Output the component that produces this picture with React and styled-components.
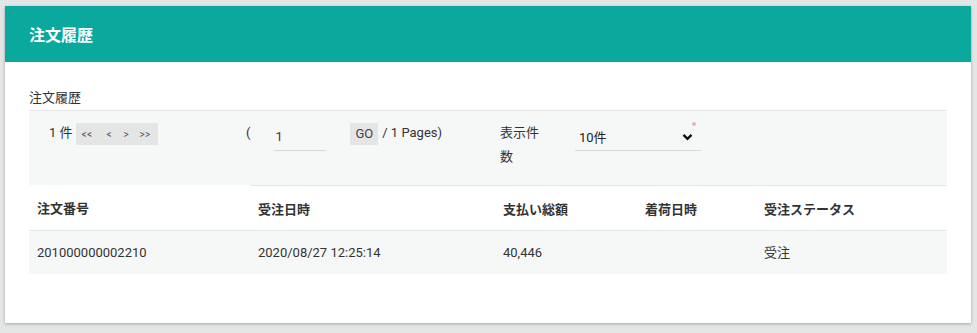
import React from 'react';
import styled, { createGlobalStyle } from 'styled-components';

const GlobalStyle = createGlobalStyle`
  body {
    margin: 0;
    background: #e4e6e5;
    font-family: Roboto, "Noto Sans CJK JP", sans-serif;
    color: #333;
    font-size: 13px;
  }
`;

const Page = styled.div`
  padding: 6px 6px 10px 5px;
`;

const Card = styled.div`
  background: #fff;
  box-shadow: 0 1px 3px rgba(0, 0, 0, 0.28);
`;

const CardHeader = styled.div`
  height: 56px;
  background: #0ba89e;
  display: flex;
  align-items: center;
  padding: 0 24px;
  color: #fff;
  font-size: 16px;
  font-weight: 700;
`;

const CardBody = styled.div`
  padding: 25px 24px 49px;
`;

const SubTitle = styled.div`
  line-height: 22px;
  margin-bottom: 1px;
`;

const FilterPanel = styled.div`
  display: flex;
  align-items: flex-start;
  background: #f6f7f7;
  border-top: 1px solid #e6e8e8;
  padding: 10px 20px 16px;
  height: 48px;
`;

const Group = styled.div`
  display: flex;
  align-items: flex-start;
  width: ${p => p.$width}px;
  flex-shrink: 0;
`;

const PlainText = styled.span`
  line-height: 24px;
  margin-right: ${p => p.$gap || 0}px;
  white-space: nowrap;
`;

const Pager = styled.div`
  display: flex;
  align-items: center;
  margin-top: 2px;
  height: 22px;
  background: #e4e6e5;
  padding: 0 0 0 6px;
  width: 82px;
  box-sizing: border-box;
`;

const PagerButton = styled.span`
  font-size: 10px;
  color: #555;
  width: ${p => p.$w}px;
  letter-spacing: 0.3px;
`;

const PageInput = styled.div`
  width: 52px;
  height: 30px;
  margin: 0 24px;
  border-bottom: 1px solid #d8d8d8;
  box-sizing: border-box;
  padding: 4px 0 0 1px;
  line-height: 24px;
  color: #800f48;
`;

const GoButton = styled.span`
  margin-top: 2px;
  height: 22px;
  line-height: 22px;
  padding: 0 5px;
  background: #e4e6e5;
  color: #444;
  margin-right: 4px;
`;

const SelectLabel = styled.div`
  width: 42px;
  line-height: 24px;
  margin-right: 33px;
`;

const Select = styled.div`
  position: relative;
  width: 126px;
  height: 30px;
  border-bottom: 1px solid #d8d8d8;
  box-sizing: border-box;
  display: flex;
  align-items: center;
  justify-content: space-between;
  padding: 2px 8px 0 4px;
  color: #222;
`;

const RequiredDot = styled.span`
  position: absolute;
  right: 5px;
  top: 1px;
  width: 4px;
  height: 4px;
  border-radius: 50%;
  background: #eab0cb;
`;

const Table = styled.table`
  width: 100%;
  border-collapse: collapse;
  table-layout: fixed;
`;

const Th = styled.th`
  box-sizing: border-box;
  text-align: left;
  font-weight: 700;
  height: 45px;
  padding: 0 8px;
  border-bottom: 1px solid #e6e8e8;
  border-top: ${p => (p.$first ? 'none' : '1px solid #e6e8e8')};
  width: ${p => p.$width}px;
`;

const Td = styled.td`
  height: 43px;
  padding: 0 8px;
  line-height: 20px;
  background: #f6f7f7;
`;

const columns = [
  { label: '注文番号', width: 221 },
  { label: '受注日時', width: 245 },
  { label: '支払い総額', width: 142 },
  { label: '着荷日時', width: 119 },
  { label: '受注ステータス', width: 191 },
];

const rows = [['201000000002210', '2020/08/27 12:25:14', '40,446', '', '受注']];

const Chevron = () => (
  <svg width="11" height="8" viewBox="0 0 11 8">
    <path d="M1.5 1.8 L5.5 5.8 L9.5 1.8" fill="none" stroke="#111" strokeWidth="2.4" />
  </svg>
);

const App = () => (
  <>
    <GlobalStyle />
    <Page>
      <Card>
        <CardHeader>注文履歴</CardHeader>
        <CardBody>
          <SubTitle>注文履歴</SubTitle>
          <FilterPanel>
            <Group $width={197}>
              <PlainText $gap={3}>1 件</PlainText>
              <Pager>
                <PagerButton $w={25}>&lt;&lt;</PagerButton>
                <PagerButton $w={17}>&lt;</PagerButton>
                <PagerButton $w={16}>&gt;</PagerButton>
                <PagerButton $w={16}>&gt;&gt;</PagerButton>
              </Pager>
            </Group>
            <Group $width={254}>
              <PlainText>(</PlainText>
              <PageInput>1</PageInput>
              <GoButton>GO</GoButton>
              <PlainText>/ 1 Pages)</PlainText>
            </Group>
            <SelectLabel>表示件数</SelectLabel>
            <Select>
              <span>10件</span>
              <Chevron />
              <RequiredDot />
            </Select>
          </FilterPanel>
          <Table>
            <thead>
              <tr>
                {columns.map((c, i) => (
                  <Th key={c.label} $width={c.width} $first={i === 0}>
                    {c.label}
                  </Th>
                ))}
              </tr>
            </thead>
            <tbody>
              {rows.map((r, i) => (
                <tr key={i}>
                  {r.map((cell, j) => (
                    <Td key={j}>{cell}</Td>
                  ))}
                </tr>
              ))}
            </tbody>
          </Table>
        </CardBody>
      </Card>
    </Page>
  </>
);

export default App;
